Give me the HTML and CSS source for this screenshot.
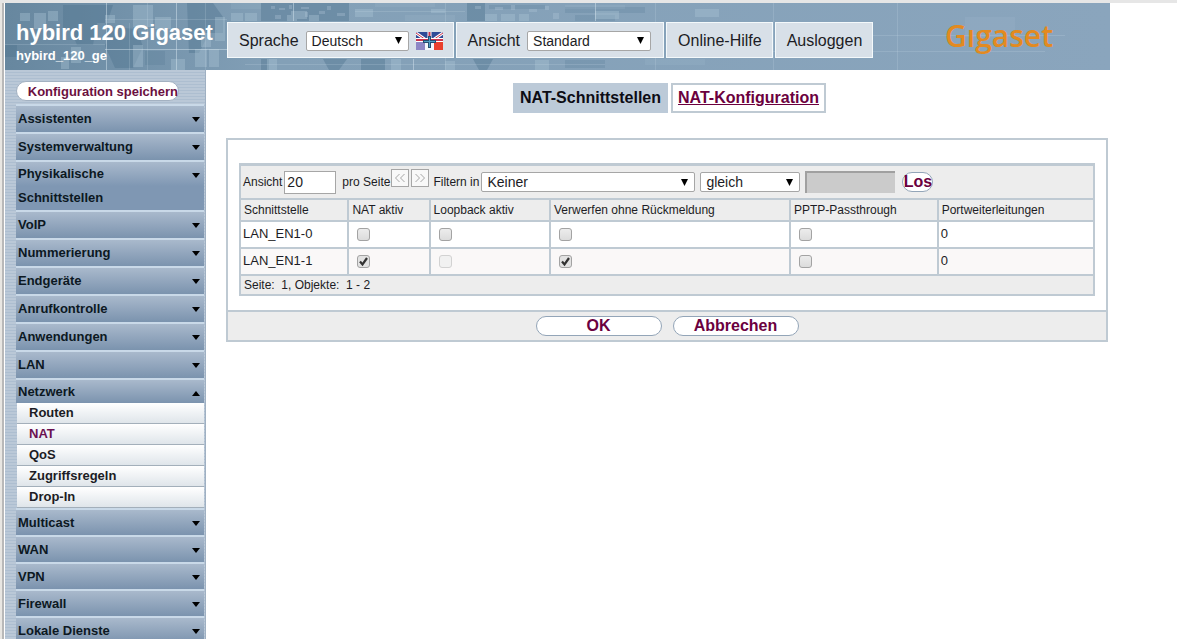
FILE: index.html
```html
<!DOCTYPE html>
<html lang="de">
<head>
<meta charset="UTF-8">
<meta name="viewport" content="width=device-width, initial-scale=1.0">
<title>hybird 120 Gigaset</title>
<link rel="stylesheet" href="styles.css">
</head>
<body>

<div class="page">

<header>
  <svg class="map" viewBox="0 0 1105 67" preserveAspectRatio="none" aria-hidden="true">
    <defs>
      <linearGradient id="sky" x1="0" x2="1" y1="0" y2="0">
        <stop offset="0" stop-color="#67879f"/>
        <stop offset="0.12" stop-color="#7493ab"/>
        <stop offset="0.25" stop-color="#83a0b7"/>
        <stop offset="1" stop-color="#8aa5bd"/>
      </linearGradient>
    </defs>
    <rect width="1105" height="67" fill="url(#sky)"/>
    <g fill="#4d728d" opacity="0.4">
      <path d="M58 2h50l-6 18h-10l-4 22h-16l-6-14h-8zM106 24l26 2 6 18-10 21h-18l-10-22zM182 0h26l10 14v16h-14l-10 20h-10zM256 0h88v18h-88zM318 56h24l-8 11h-10zM256 56h8v11h-8zM462 0h18v18h-18zM468 56h20l-6 11h-8zM356 56h24v11h-24zM0 42h12v12h-12z"/>
      <path d="M484 2h56v4h-56zM560 4h80v6h-80zM570 12h40v6h-40zM560 57h40v8h-40zM140 48h20v14h-20z" opacity="0.5"/>
    </g>
    <g fill="#a9c3d4" opacity="0.4">
      <path d="M15 10h10v8h-10zM29 10h12v16h-12zM43 8h10v10h-10zM66 44h10v16h-10zM100 12h10v8h-10zM128 2h20v22h-20zM128 42h10v22h-10zM150 14h16v12h-16zM190 46h12v18h-12zM204 46h10v18h-10zM196 30h10v14h-10zM210 14h10v24h-10zM226 10h12v8h-12zM240 10h12v8h-12zM286 8h16v8h-16zM304 12h10v6h-10zM262 56h10v11h-10zM282 12h10v6h-10zM350 6h18v8h-18zM386 56h10v11h-10zM426 6h14v4h-14zM440 58h10v9h-10zM480 11h12v7h-12zM496 11h14v7h-14zM514 11h10v7h-10zM590 8h24v8h-24zM530 57h14v10h-14zM690 6h24v8h-24zM56 54h8v12h-8zM166 56h14v11h-14z"/>
      <path d="M226 0h30v6h-30zM370 0h60v4h-60zM400 12h50v6h-50zM560 2h60v4h-60zM640 56h60v6h-60zM960 14h50v20h-50z" opacity="0.4"/>
    </g>
    <g fill="#b5cbd9" opacity="0.3">
      <path d="M266 3h4v3h-4zM274 5h6v2h-6zM284 2h3v4h-3zM296 4h8v2h-8zM314 8h6v3h-6zM322 3h4v4h-4zM332 10h8v3h-8zM300 9h3v5h-3zM470 3h6v3h-6zM490 4h8v3h-8zM506 2h4v5h-4zM524 6h8v3h-8zM540 3h4v4h-4zM270 12h6v4h-6zM548 10h6v6h-6z"/>
    </g>
    <g stroke="#d3e4ee" opacity="0.5">
      <path d="M101.500 0v67M171.500 0v67M288.500 0v18M408.500 56v11M590.500 0v18M100 46.500h122" fill="none"/>
    </g>
    <g stroke="#d3e4ee" opacity="0.18">
      <path d="M100 16.500h122M350 8.500h110M240 61.500h360M124.500 20v47M142.500 0v67M200.500 0v67M440.500 0v67M650.500 0v67M768.500 0v67M892.500 0v67M740 48.500h300M0 41.500h100M860 32.500h200" fill="none"/>
    </g>
  </svg>
  <div class="device">
    <h1>hybird 120 Gigaset</h1>
    <p>hybird_120_ge</p>
  </div>
  <nav class="top-nav">
    <div class="top-box">
      <label for="language">Sprache</label>
      <select id="language" class="select-language"><option>Deutsch</option></select>
      <svg class="flag" viewBox="0 0 27 18" role="img" aria-label="Sprache">
        <rect width="27" height="18" fill="#2f4b97"/>
        <rect y="9" width="9" height="9" fill="#8d86c5"/>
        <rect x="9" y="9" width="9" height="9" fill="#f4f6fa"/>
        <rect x="18" y="9" width="9" height="9" fill="#e9402d"/>
        <path d="M0 1l10 7M27 1l-10 7" stroke="#fff" stroke-width="3"/>
        <path d="M0 1l10 7M27 1l-10 7" stroke="#c9344e" stroke-width="1"/>
        <path d="M13.500 0v10M0 8h27" stroke="#fff" stroke-width="4"/>
        <path d="M13.500 0v8M0 8h27" stroke="#c9344e" stroke-width="2"/>
        <path d="M13.500 4v12M7 9.500h13" stroke="#254d70" stroke-width="3"/>
        <path d="M13.500 5v10M8 9.500h11" stroke="#4f9bc4" stroke-width="1"/>
      </svg>
    </div>
    <div class="top-box">
      <label for="view">Ansicht</label>
      <select id="view" class="select-view"><option>Standard</option></select>
    </div>
    <a class="top-box" href="#">Online-Hilfe</a>
    <a class="top-box" href="#">Ausloggen</a>
  </nav>
  <span class="logo">Gıgaset</span>
</header>

<div class="main_body">

<aside>
  <button type="button" class="save">Konfiguration speichern</button>
  <ul class="menu">
    <li><button type="button">Assistenten</button></li>
    <li><button type="button">Systemverwaltung</button></li>
    <li class="tall"><button type="button">Physikalische<br>Schnittstellen</button></li>
    <li><button type="button">VoIP</button></li>
    <li><button type="button">Nummerierung</button></li>
    <li><button type="button">Endgeräte</button></li>
    <li><button type="button">Anrufkontrolle</button></li>
    <li><button type="button">Anwendungen</button></li>
    <li><button type="button">LAN</button></li>
    <li class="open">
      <button type="button">Netzwerk</button>
      <ul class="submenu">
        <li><a href="#">Routen</a></li>
        <li><a href="#" class="current">NAT</a></li>
        <li><a href="#">QoS</a></li>
        <li><a href="#">Zugriffsregeln</a></li>
        <li><a href="#">Drop-In</a></li>
      </ul>
    </li>
    <li><button type="button">Multicast</button></li>
    <li><button type="button">WAN</button></li>
    <li><button type="button">VPN</button></li>
    <li><button type="button">Firewall</button></li>
    <li><button type="button">Lokale Dienste</button></li>
  </ul>
</aside>

<main>
  <div class="tabs">
    <a href="#" class="tab active">NAT-Schnittstellen</a>
    <a href="#" class="tab">NAT-Konfiguration</a>
  </div>

  <form class="panel">
    <div class="panel-body">
      <div class="filter">
        <label for="count">Ansicht</label>
        <input type="text" id="count" class="count" value="20">
        <span class="per-page">pro Seite</span>
        <button type="button" class="pager" aria-label="Zurück"><svg viewBox="0 0 12 10"><path d="M5.500 1l-4 4 4 4M10.500 1l-4 4 4 4"/></svg></button>
        <button type="button" class="pager" aria-label="Weiter"><svg viewBox="0 0 12 10"><path d="M1.500 1l4 4-4 4M6.500 1l4 4-4 4"/></svg></button>
        <label for="field">Filtern in</label>
        <select id="field" class="select-field"><option>Keiner</option></select>
        <select class="select-op" aria-label="Operator"><option>gleich</option></select>
        <input type="text" class="term" aria-label="Filterwert" disabled>
        <button type="button" class="round go">Los</button>
      </div>
      <table>
        <colgroup>
          <col class="c-name"><col class="c-nat"><col class="c-loop"><col class="c-drop"><col class="c-pptp"><col>
        </colgroup>
        <thead>
          <tr>
            <th>Schnittstelle</th>
            <th>NAT aktiv</th>
            <th>Loopback aktiv</th>
            <th>Verwerfen ohne Rückmeldung</th>
            <th>PPTP-Passthrough</th>
            <th>Portweiterleitungen</th>
          </tr>
        </thead>
        <tbody>
          <tr>
            <td>LAN_EN1-0</td>
            <td><input type="checkbox" aria-label="NAT aktiv"></td>
            <td><input type="checkbox" aria-label="Loopback aktiv"></td>
            <td><input type="checkbox" aria-label="Verwerfen ohne Rückmeldung"></td>
            <td><input type="checkbox" aria-label="PPTP-Passthrough"></td>
            <td>0</td>
          </tr>
          <tr>
            <td>LAN_EN1-1</td>
            <td><input type="checkbox" aria-label="NAT aktiv" checked></td>
            <td><input type="checkbox" aria-label="Loopback aktiv" disabled></td>
            <td><input type="checkbox" aria-label="Verwerfen ohne Rückmeldung" checked></td>
            <td><input type="checkbox" aria-label="PPTP-Passthrough"></td>
            <td>0</td>
          </tr>
        </tbody>
        <tfoot>
          <tr>
            <td colspan="6">Seite:&nbsp; 1, Objekte:&nbsp; 1 - 2</td>
          </tr>
        </tfoot>
      </table>
    </div>
    <div class="panel-buttons">
      <button type="button" class="round">OK</button>
      <button type="button" class="round">Abbrechen</button>
    </div>
  </form>
</main>

</div>

</div>

</body>
</html>
```
FILE: styles.css
```css
* {
  box-sizing: border-box;
}
body {
  margin: 0;
  font-family: "Liberation Sans", Arial, sans-serif;
  color: #1c1c24;
  background: #fff;
}
button, input, select {
  font-family: inherit;
  color: inherit;
}
ul {
  list-style: none;
  margin: 0;
  padding: 0;
}
.page {
  display: flex;
  flex-direction: column;
  height: 100vh;
  overflow: hidden;
  border-top: 3px solid #b4b4b4;
  border-image: linear-gradient(#e6e6e6 60%, #b0b0b0 61%) 3;
  background: linear-gradient(90deg, #e8e6e2 2px, #b8b8b8 2px, #b8b8b8 4px, #fff 4px);
  padding-left: 5px;
}

/* header */
header {
  position: relative;
  display: flex;
  align-items: flex-start;
  flex-shrink: 0;
  height: 67px;
  margin-right: 67px;
}
.map {
  position: absolute;
  inset: 0;
  width: 100%;
  height: 100%;
}
.device, .top-nav, .logo {
  position: relative;
}
.device {
  flex: 0 0 222px;
  padding: 17px 0 0 11px;
  color: #fff;
  white-space: nowrap;
}
.device h1 {
  margin: 0;
  font-size: 22px;
  line-height: 26px;
}
.device p {
  margin: 3px 0 0;
  font-size: 13px;
  line-height: 14px;
  font-weight: bold;
}
.top-nav {
  display: flex;
  gap: 2px;
  margin-top: 19px;
}
.top-box {
  display: flex;
  align-items: center;
  gap: 7px;
  height: 36px;
  padding: 1px 10px 0 11px;
  border: 1px solid #f4f9fb;
  background: #d8e0e8;
  color: #1c1c24;
  font-size: 16px;
  text-decoration: none;
  white-space: nowrap;
}
.logo {
  margin: 11px 57px 0 auto;
  font-family: "Open Sans", sans-serif;
  font-weight: 600;
  font-size: 30px;
  line-height: 44px;
  color: #e38a20;
}
.flag {
  width: 27px;
  height: 18px;
}

/* form controls */
select {
  appearance: none;
  height: 20px;
  padding: 0 5px;
  border: 1px solid #a6a6a6;
  border-radius: 2px;
  font-size: 14px;
  background: #fff url("data:image/svg+xml,%3Csvg xmlns='http://www.w3.org/2000/svg' width='7' height='7'%3E%3Cpath d='M0 0h7L3.500 7z'/%3E%3C/svg%3E") no-repeat right 6px center;
}
.select-language {
  width: 103px;
}
.select-view {
  width: 124px;
  margin-right: 2px;
}
.select-field {
  width: 214px;
}
.select-op {
  width: 100px;
}
input[type="checkbox"] {
  appearance: none;
  display: block;
  width: 13px;
  height: 13px;
  margin: 2px 0 0 6px;
  border: 1px solid #a3a3a3;
  border-radius: 3px;
  background: linear-gradient(#ececec, #dcdcdc);
}
input[type="checkbox"]:checked {
  background: #e2e2e2 url("data:image/svg+xml,%3Csvg xmlns='http://www.w3.org/2000/svg' width='11' height='11'%3E%3Cpath d='M2 5.500l2.500 3L9 2' fill='none' stroke='%23333' stroke-width='2.200'/%3E%3C/svg%3E") no-repeat center;
}
input[type="checkbox"]:disabled {
  border-color: #d2d2d2;
  background: #f1f1f1;
}
.round {
  width: 126px;
  height: 20px;
  padding: 0;
  border: 1px solid #93a5b8;
  border-radius: 10px;
  background: #fff;
  color: #6b003e;
  font-size: 16px;
  line-height: 18px;
  font-weight: bold;
}

/* side menu */
.main_body {
  display: flex;
  flex: 1;
  min-height: 0;
}
aside {
  flex: 0 0 201px;
  padding: 11px 1px 0 11px;
  border-right: 1px solid #9fb0c2;
  background: repeating-linear-gradient(#bac8d7 0, #bac8d7 2px, #adbed0 2px, #adbed0 3px);
}
.save {
  display: block;
  width: 163px;
  height: 20px;
  margin: 0 0 3px;
  padding: 0;
  border: 1px solid #a3b1c1;
  border-radius: 10px;
  background: #fff;
  color: #6b1040;
  font-size: 13px;
  line-height: 20px;
  font-weight: bold;
  text-align: right;
  white-space: nowrap;
}
.menu button {
  display: block;
  position: relative;
  width: 100%;
  height: 28px;
  padding: 0 2px;
  border: 0;
  border-top: 2px solid #c9d9e8;
  background: linear-gradient(#a9b9cc, #7b93ae);
  color: #0c1822;
  font-size: 13px;
  line-height: 24px;
  font-weight: bold;
  text-align: left;
}
.menu button::after {
  content: "";
  position: absolute;
  top: 11px;
  right: 4px;
  border: 4px solid transparent;
  border-top: 5px solid #000;
  border-bottom: 0;
}
.menu .tall button {
  height: 50px;
  background: linear-gradient(#a9b9cc, #7f97b3 50%);
}
.menu .open button {
  height: 25px;
}
.menu .open button::after {
  border-top: 0;
  border-bottom: 5px solid #000;
}
.menu .open ~ li button {
  height: 27px;
}
.submenu {
  padding: 0 0 0 1px;
}
.submenu a {
  display: block;
  height: 21px;
  padding-left: 12px;
  border-bottom: 1px solid #a3afba;
  background: linear-gradient(#fff, #dfe5ea);
  color: #1c1c24;
  font-size: 13px;
  line-height: 19px;
  font-weight: bold;
  text-decoration: none;
}
.submenu .current {
  color: #6b1050;
}

/* content */
main {
  flex: 1;
  min-width: 0;
  padding: 13px 69px 0 20px;
}
.tabs {
  display: flex;
  justify-content: center;
  gap: 3px;
  margin-bottom: 25px;
  padding-left: 5px;
}
.tab {
  padding: 0 5px;
  border: 2px solid #bfcad3;
  color: #6b003e;
  font-size: 16px;
  line-height: 26px;
  font-weight: bold;
}
.tab.active {
  background: #bccad8;
  border-color: #bccad8;
  color: #0c0c14;
  text-decoration: none;
}
.panel {
  border: 2px solid #bfcad3;
}
.panel-body {
  padding: 23px 11px 14px;
}
.filter {
  display: flex;
  align-items: center;
  height: 35px;
  padding: 0 2px;
  border: 2px solid #bfcad3;
  border-top-width: 3px;
  border-bottom: 0;
  background: #ededed;
  font-size: 12px;
  white-space: nowrap;
}
.count {
  width: 52px;
  height: 23px;
  margin: 0 6px 0 2px;
  padding: 0 2px;
  border: 1px solid #a6a6a6;
  font-size: 14px;
}
.per-page {
  margin-right: 1px;
}
.pager {
  display: flex;
  align-items: center;
  justify-content: center;
  align-self: flex-start;
  width: 18px;
  height: 18px;
  margin: 3px 2px 0 0;
  padding: 0;
  border: 1px solid #a6a6a6;
  background: #f8f8f8;
}
.pager svg {
  width: 12px;
  height: 10px;
  fill: none;
  stroke: #a6a6a6;
}
.pager + label {
  margin: 0 2px;
}
.select-op {
  margin: 0 5px;
}
.term {
  width: 90px;
  height: 22px;
  border: 0;
  border-top: 2px solid #a0a0a0;
  border-left: 2px solid #a0a0a0;
  background: #cbcbcb;
}
.go {
  width: 31px;
  margin-left: 7px;
}
table {
  width: 100%;
  table-layout: fixed;
  border-collapse: collapse;
}
.c-name { width: 12.7%; }
.c-nat { width: 9.5%; }
.c-loop { width: 14.1%; }
.c-drop { width: 28.1%; }
.c-pptp { width: 17.3%; }
th, td {
  border: 2px solid #bfcad3;
  padding: 0 3px;
  text-align: left;
  white-space: nowrap;
}
th {
  height: 22px;
  background: #ededed;
  font-size: 12px;
  font-weight: normal;
}
td {
  height: 27px;
  padding: 0 2px 2px;
  font-size: 13px;
}
tbody tr:nth-child(2) {
  background: #faf8f8;
}
tfoot td {
  height: 20px;
  padding: 0 3px;
  background: #ededed;
  font-size: 12px;
}
.panel-buttons {
  display: flex;
  justify-content: center;
  gap: 11px;
  padding: 4px 0;
  border-top: 2px solid #bfcad3;
  background: #ededed;
}
```
